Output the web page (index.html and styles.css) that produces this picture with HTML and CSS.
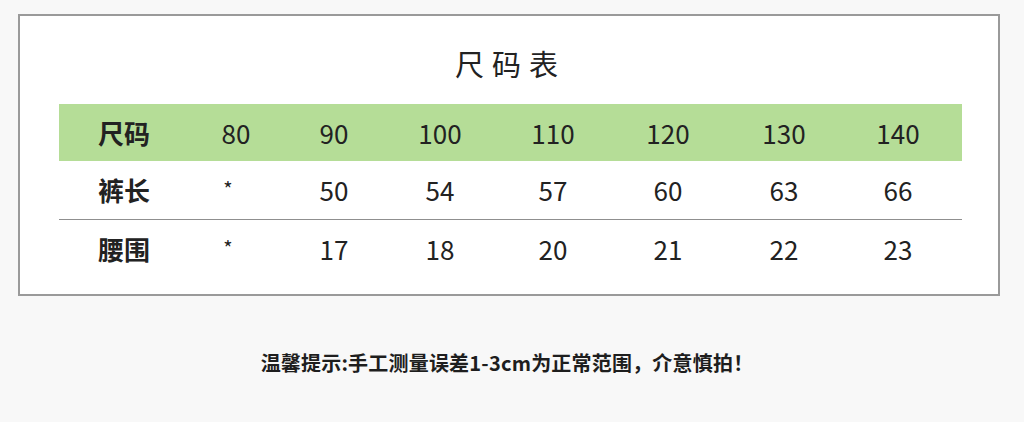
FILE: index.html
```html
<!DOCTYPE html>
<html lang="zh-CN">
<head>
<meta charset="utf-8">
<title>尺码表</title>
<link rel="stylesheet" href="styles.css">
</head>
<body>
<div class="card">
  <h1 class="title">尺码表</h1>
  <div class="table">
    <div class="row head">
      <div class="cell label">尺码</div>
      <div class="cell">80</div>
      <div class="cell">90</div>
      <div class="cell">100</div>
      <div class="cell">110</div>
      <div class="cell">120</div>
      <div class="cell">130</div>
      <div class="cell">140</div>
    </div>
    <div class="row sep">
      <div class="cell label">裤长</div>
      <div class="cell star">*</div>
      <div class="cell">50</div>
      <div class="cell">54</div>
      <div class="cell">57</div>
      <div class="cell">60</div>
      <div class="cell">63</div>
      <div class="cell">66</div>
    </div>
    <div class="row">
      <div class="cell label">腰围</div>
      <div class="cell star">*</div>
      <div class="cell">17</div>
      <div class="cell">18</div>
      <div class="cell">20</div>
      <div class="cell">21</div>
      <div class="cell">22</div>
      <div class="cell">23</div>
    </div>
  </div>
</div>
<p class="note">温馨提示:手工测量误差1-3cm为正常范围，介意慎拍！</p>
</body>
</html>
```
FILE: styles.css
```css
html, body {
  margin: 0;
  padding: 0;
}
body {
  background: #f8f8f8;
  font-family: "Noto Sans CJK SC", "Noto Sans", sans-serif;
  color: #222;
  width: 1024px;
  height: 422px;
  overflow: hidden;
}
.card {
  box-sizing: border-box;
  margin: 14px 0 0 18px;
  width: 982px;
  height: 282px;
  border: 2px solid #9a9a9a;
  background: #fff;
  padding: 0 36px 0 39px;
}
.title {
  margin: 0;
  height: 88px;
  display: flex;
  align-items: center;
  justify-content: center;
  font-size: 29px;
  font-weight: 400;
  letter-spacing: 8px;
  line-height: 1;
  box-sizing: border-box;
  padding-top: 6px;
}
.table {
  width: 903px;
}
.row {
  display: grid;
  grid-template-columns: 132px 90px 106px 106px 120px 110px 122px 106px;
  height: 58px;
  align-items: center;
}
.row.head {
  background: #b5dd97;
  height: 57px;
}
.row.sep {
  border-bottom: 1px solid #8f8f8f;
}
.cell {
  text-align: center;
  font-size: 26px;
  line-height: 1;
}
.cell.label {
  font-weight: 700;
  font-size: 26px;
  padding-right: 2px;
}
.cell.star {
  font-size: 20px;
  align-self: start;
  padding-top: 18px;
  padding-right: 16px;
}
.note {
  margin: 57px 0 0 0;
  padding-right: 10px;
  text-align: center;
  font-size: 20px;
  font-weight: 700;
  color: #1e1e1e;
  line-height: 1;
  letter-spacing: 0.2px;
}
```
